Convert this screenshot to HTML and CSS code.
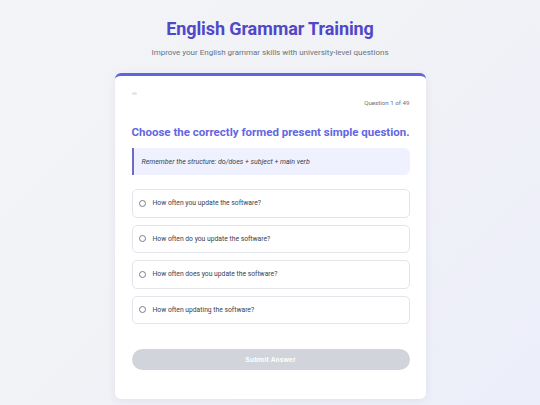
FILE: index.html
```html
<!DOCTYPE html>
<html lang="en">
<head>
<meta charset="utf-8">
<title>English Grammar Training</title>
<link rel="stylesheet" href="styles.css">
</head>
<body>
<main class="page">
  <header class="header">
    <h1 class="title">English Grammar Training</h1>
    <p class="subtitle">Improve your English grammar skills with university-level questions</p>
  </header>
  <section class="card">
    <div class="progress"><div class="progress-fill"></div></div>
    <div class="counter">Question 1 of 49</div>
    <h2 class="question">Choose the correctly formed present simple question.</h2>
    <div class="hint">Remember the structure: do/does + subject + main verb</div>
    <div class="options">
      <label class="option"><span class="radio"></span><span class="option-text">How often you update the software?</span></label>
      <label class="option"><span class="radio"></span><span class="option-text">How often do you update the software?</span></label>
      <label class="option"><span class="radio"></span><span class="option-text">How often does you update the software?</span></label>
      <label class="option"><span class="radio"></span><span class="option-text">How often updating the software?</span></label>
    </div>
    <button class="submit" disabled>Submit Answer</button>
  </section>
</main>
</body>
</html>
```
FILE: styles.css
```css
* { box-sizing: border-box; }
html, body { margin: 0; padding: 0; }
body {
  width: 540px;
  height: 405px;
  overflow: hidden;
  font-family: Roboto, "Liberation Sans", sans-serif;
  background: linear-gradient(135deg, #f3f4f7 0%, #f1f2f6 50%, #eceefa 100%);
}
.page {
  width: 540px;
  display: flex;
  flex-direction: column;
  align-items: center;
  padding-top: 18px;
}
.header { text-align: center; }
.title {
  margin: 0;
  font-size: 18px;
  line-height: 22px;
  font-weight: 700;
  color: #5047c9;
  letter-spacing: -0.1px;
}
.subtitle {
  margin: 8px 0 0;
  font-size: 8px;
  line-height: 10px;
  color: #6b7280;
}
.card {
  margin-top: 15px;
  width: 311px;
  background: #fff;
  border-radius: 6px;
  border-top: 3px solid #6163e0;
  box-shadow: 0 2px 8px rgba(60, 60, 100, 0.08);
  padding: 16px 16px 29px 17px;
  display: flex;
  flex-direction: column;
}
.progress {
  width: 5px;
  height: 3px;
  border-radius: 2px;
  background: #e5e7eb;
}
.progress-fill { width: 0; height: 100%; }
.counter {
  margin-top: 3px;
  text-align: right;
  font-size: 6.2px;
  line-height: 10px;
  color: #6b7280;
}
.question {
  margin: 16px 0 0;
  font-size: 11.5px;
  line-height: 16px;
  font-weight: 700;
  color: #6366e0;
  white-space: nowrap;
}
.hint {
  margin-top: 8px;
  height: 27px;
  display: flex;
  align-items: center;
  padding-left: 8px;
  background: #f0f1ff;
  border-left: 2px solid #7068cc;
  border-radius: 0 6px 6px 0;
  font-size: 7px;
  font-style: italic;
  color: #374151;
}
.options {
  margin-top: 14px;
  display: flex;
  flex-direction: column;
  gap: 7px;
}
.option {
  height: 28.5px;
  display: flex;
  align-items: center;
  gap: 6.5px;
  padding-left: 6.5px;
  border: 1px solid #e3e5ea;
  border-radius: 5px;
  background: #fff;
}
.radio {
  width: 7px;
  height: 7px;
  border: 1px solid #7a7f88;
  border-radius: 50%;
  flex: none;
}
.option-text {
  font-size: 6.75px;
  color: #374151;
}
.submit {
  margin-top: 25px;
  height: 21px;
  border: none;
  border-radius: 11px;
  background: #d1d5db;
  color: #fff;
  font-family: "Liberation Sans", Arial, sans-serif;
  font-size: 6.6px;
  font-weight: 700;
  letter-spacing: 0.2px;
  padding: 0;
}
```
